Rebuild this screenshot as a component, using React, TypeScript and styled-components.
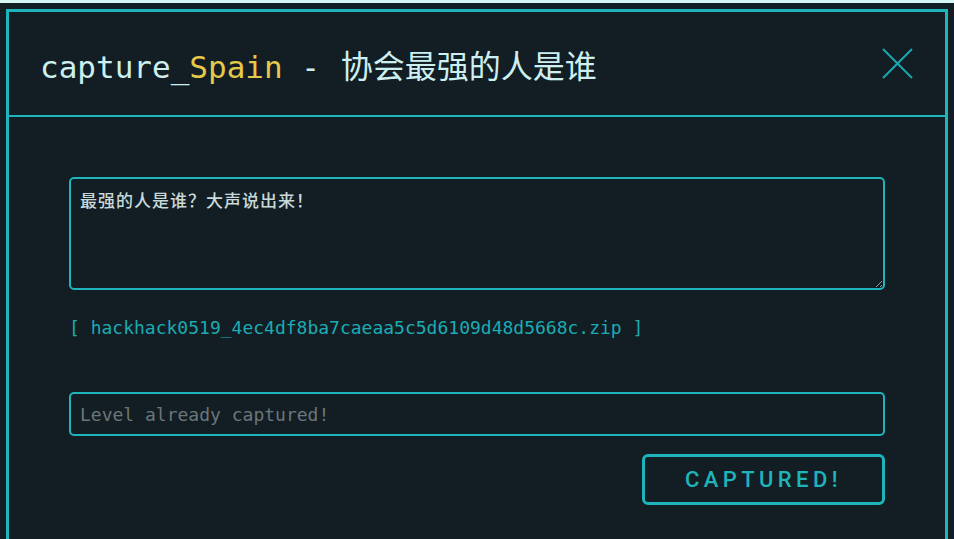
import React from 'react';
import styled, { createGlobalStyle } from 'styled-components';

const teal = '#1fb3bb';
const bg = '#121e24';

const GlobalStyle = createGlobalStyle`
    html, body {
        margin: 0;
        padding: 0;
        background: ${bg};
        overflow: hidden;
    }
`;

const TopStrip = styled.div`
    height: 3px;
    background: #d4f6f6;
`;

const Modal = styled.div`
    margin: 6px 0 0 6px;
    width: 942px;
    min-height: 600px;
    box-sizing: border-box;
    border: 3px solid ${teal};
    background: ${bg};
`;

const Header = styled.div`
    display: flex;
    align-items: center;
    justify-content: space-between;
    height: 103px;
    padding: 0 32px 0 31px;
    border-bottom: 2px solid ${teal};
`;

const Title = styled.h1`
    margin: 0;
    font-family: 'DejaVu Sans Mono', 'Noto Sans CJK SC', monospace;
    font-size: 31px;
    font-weight: 400;
    color: #cdeff0;
    white-space: pre;
`;

const Country = styled.span`
    color: #e6c84a;
`;

const LevelName = styled.span`
    margin-left: 2px;
    font-family: 'Noto Sans CJK SC', sans-serif;
    font-size: 32px;
`;

const CloseButton = styled.button`
    display: flex;
    padding: 0;
    border: none;
    background: none;
    cursor: pointer;
`;

const Body = styled.div`
    display: flex;
    flex-direction: column;
    padding: 60px 60px 0;
`;

const Question = styled.textarea`
    box-sizing: border-box;
    height: 113px;
    padding: 9px 9px;
    border: 2px solid ${teal};
    border-radius: 5px;
    background: ${bg};
    color: #c9d9d9;
    font-family: 'Noto Sans CJK SC', sans-serif;
    font-size: 17px;
    font-weight: 500;
    letter-spacing: 1px;
    line-height: 24px;
    outline: none;
`;

const FileLink = styled.a`
    margin-top: 27px;
    font-family: 'DejaVu Sans Mono', monospace;
    font-size: 18px;
    line-height: 22px;
    color: #1cabb3;
    text-decoration: none;
`;

const FlagInput = styled.input`
    box-sizing: border-box;
    margin-top: 53px;
    height: 44px;
    padding: 0 9px;
    border: 2px solid ${teal};
    border-radius: 5px;
    background: ${bg};
    font-family: 'DejaVu Sans Mono', monospace;
    font-size: 18px;
    color: #c9d9d9;
    outline: none;

    &::placeholder {
        color: #6b7679;
    }
`;

const Actions = styled.div`
    display: flex;
    justify-content: flex-end;
    margin-top: 18px;
`;

const SubmitButton = styled.button`
    box-sizing: border-box;
    width: 243px;
    height: 51px;
    border: 3px solid ${teal};
    border-radius: 6px;
    background: ${bg};
    color: ${teal};
    font-family: Roboto, 'Liberation Sans', sans-serif;
    font-size: 22px;
    font-weight: 500;
    letter-spacing: 4.4px;
    padding: 0;
    cursor: default;
`;

const CloseIcon: React.FC = () => (
    <svg width="31" height="31" viewBox="0 0 31 31">
        <path d="M1 1 L30 30 M30 1 L1 30" stroke="#1aa7af" strokeWidth="2" fill="none" />
    </svg>
);

export default function App() {
    return (
        <>
            <GlobalStyle />
            <TopStrip />
            <Modal>
                <Header>
                    <Title>
                        capture_<Country>Spain</Country> - <LevelName>协会最强的人是谁</LevelName>
                    </Title>
                    <CloseButton aria-label="close">
                        <CloseIcon />
                    </CloseButton>
                </Header>
                <Body>
                    <Question readOnly defaultValue="最强的人是谁？大声说出来！" />
                    <FileLink href="#">
                        [ hackhack0519_4ec4df8ba7caeaa5c5d6109d48d5668c.zip ]
                    </FileLink>
                    <FlagInput placeholder="Level already captured!" disabled />
                    <Actions>
                        <SubmitButton>CAPTURED!</SubmitButton>
                    </Actions>
                </Body>
            </Modal>
        </>
    );
}
